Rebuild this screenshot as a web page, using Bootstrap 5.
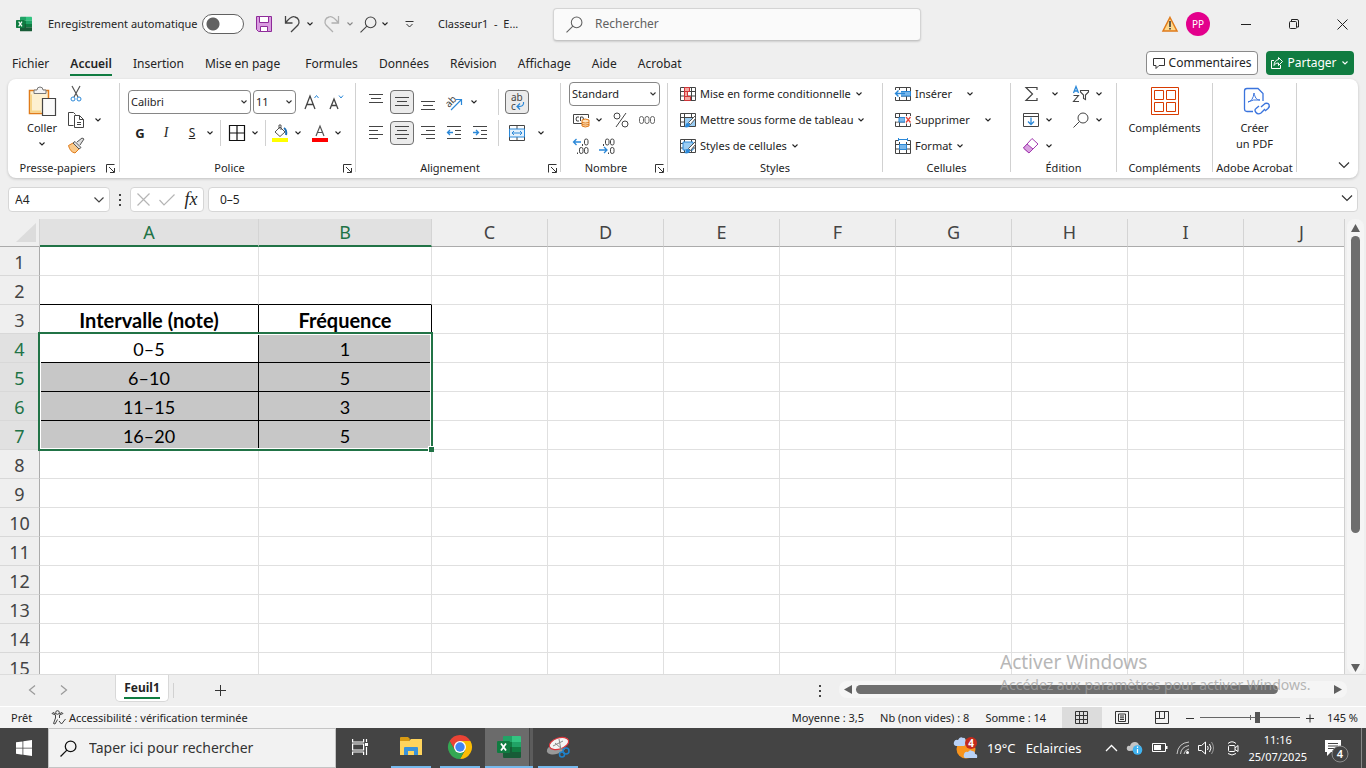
<!DOCTYPE html>
<html lang="fr">
<head>
<meta charset="utf-8">
<meta name="viewport" content="width=device-width, initial-scale=1">
<title>Classeur1 - Excel</title>
<link href="https://cdn.jsdelivr.net/npm/bootstrap@5.3.0/dist/css/bootstrap.min.css" rel="stylesheet">
<style>
body{font-family:"Noto Sans","Open Sans",sans-serif;font-size:11px;line-height:16px;color:#242424;background:#efefef;overflow:hidden}
svg{display:block;flex:none;fill:none;overflow:visible}
button,.form-control,.form-select{font-size:inherit;line-height:inherit}
.plain{border:0;background:none;padding:0;color:inherit;display:flex;align-items:center;justify-content:center;white-space:nowrap;flex:none}
.s12{width:12px}.s16{width:16px}.s24{width:24px;height:24px}
.m12{margin-left:12px}
.ic{stroke:#444;stroke-width:1}
.t12{font-size:12px}.t13{font-size:13px}.t14{font-size:14px}
/* title bar */
.titlebar{height:48px;padding-left:16px}
.quick{width:537px}
.autosave{width:154px}
.form-check-input.toggle{width:42px;height:20px;margin:0 12px 0 0;border:1px solid #616161;background:#fff radial-gradient(circle at 10px 9px,#616161 0 6px,#fff 7px) no-repeat;border-radius:10px;flex:none}
.finder{width:368px;height:33px;background:#fafafa;border:1px solid #d4d4d4;border-bottom-color:#c4c4c4;border-radius:4px;padding:0 12px;box-shadow:0 1px 2px #0002}
.finder input,.cellref input,.formula input{border:0;background:none;padding:0;box-shadow:none;color:inherit}
.finder input::placeholder{color:#616161}
.avatar{width:24px;height:24px;border-radius:50%;background:#e3008c;color:#fff;font-size:10px}
.winbtn{width:48px;height:32px}
/* tabs */
.tabs{height:30px;padding:0 12px}
.tabs .nav{gap:21px}
.tabs .nav-link{padding:2px 0 0;color:#242424;font-size:12px;line-height:21px;border-bottom:2px solid transparent}
.tabs .nav-link.active{font-weight:600;border-color:#107c41}
.cmt{height:24px;width:112px;border:1px solid #8a8a8a;border-radius:4px;background:#fff}
.share{height:24px;width:88px;border-radius:4px;background:#107c41;color:#fff}
/* ribbon */
.ribbon{margin:1px 8px 0;height:99px;background:#fff;border-radius:8px;box-shadow:0 1px 3px #0003}
.group{padding-top:2px;flex:none}
.rows{height:78px}
.rows.two{padding-top:8px;gap:5px}
.line{height:26px;display:flex;align-items:center}
.sep{width:1px;background:#d1d1d1;flex:none}
.gsep{margin:4px 0 6px}
.caption{height:18px;text-align:center;position:relative;padding-top:1px}
.launch{position:absolute;right:3px;top:5px}
.on{background:#ebebeb;border:1px solid #707070;border-radius:4px}
.picker{height:24px;border:1px solid #868686;border-radius:4px;padding:0 14px 0 2px;color:#242424;background:#fff url("data:image/svg+xml,%3Csvg xmlns='http://www.w3.org/2000/svg' viewBox='0 0 8 8'%3E%3Cpath d='M1.500 2.500 4 5l2.500-2.500' fill='none' stroke='%23333' stroke-width='1.100'/%3E%3C/svg%3E") no-repeat right 2px center/8px 8px}
.big{flex-direction:column;justify-content:flex-start;line-height:16px}
/* formula bar */
.fbar{margin:9px 8px 0;height:25px}
.box{border:1px solid #d6d6d6;border-radius:4px;background:#fff;height:25px;display:flex;align-items:center}
.cellref{width:102px;padding:0 5px 0 6px}
.fx{font:italic 18px "Liberation Serif",serif}
/* sheet */
.sheet{margin-top:7px;border-bottom:1px solid #dcdcdc}
.gridwrap{overflow:hidden;border-right:1px solid #d0d0d0;margin-right:2px;min-width:0}
.cells{table-layout:fixed;width:1360px;border-collapse:separate;border-spacing:0;color:#000;text-align:center}
.cells th,.cells td{padding:2px 0 0;font-size:18px;line-height:26px;height:29px;font-weight:400}
.cells thead th{padding:0;height:28px;line-height:27px;color:#444;background:#efefef;border-bottom:1px solid #ababab;border-right:1px solid #d4d4d4}
.cells thead th.sel{background:#e1e1e1;color:#217346;border-bottom:2px solid #217346;line-height:26px}
.cells tbody th{color:#444;background:#efefef;border-right:1px solid #ababab;border-bottom:1px solid #d8d8d8}
.cells tbody th.sel{background:#e1e1e1;color:#217346}
.cells td{background:#fff;border-right:1px solid #e0e0e0;border-bottom:1px solid #e0e0e0;font-family:Lato,sans-serif;position:relative}
.cells td.k{border-color:#000}
.cells td.kb{border-bottom-color:#000}
.cells td.g{background:#c7c7c7}
.cells td.h{font-weight:700;font-size:20px}
.range{position:absolute;left:-2px;top:-2px;width:395px;height:119px;border:2px solid #217346;box-shadow:inset 0 0 0 1px #fff;z-index:2}
.range i{position:absolute;right:-3px;bottom:-3px;width:6px;height:6px;background:#217346;border:1px solid #fff;border-width:1px 0 0 1px}
.vscroll{width:17px;margin-right:2px;background:#f5f5f5;border-radius:8px;padding:5px 0 2px}
.vthumb{width:9px;height:70%;background:#6e6e6e;border-radius:5px}
/* bottom bars */
.sheetbar{height:31px;padding-left:20px}
.sheettab{width:54px;height:27px;background:#fff;border:1px solid #d8d8d8;border-top:0;border-radius:0 0 5px 5px;font-size:12px;font-weight:700;color:#242424;margin-left:39px}
.sheettab span{border-bottom:2px solid #107c41;line-height:19px}
.hscroll{width:508px;height:17px;margin:6px 19px 0 0;background:#f5f5f5;border-radius:8px;padding:0 5px}
.hthumb{width:89%;height:9px;background:#6e6e6e;border-radius:5px}
.status{height:22px;background:#f3f3f3;border-top:1px solid #fff;padding-left:11px}
.view{width:40px;height:21px}
.zoomer{appearance:none;width:100px;height:16px;margin:0 5px;background:linear-gradient(#666,#666) center/100% 1px no-repeat,linear-gradient(#666,#666) center/1px 5px no-repeat}
.zoomer::-webkit-slider-thumb{appearance:none;width:5px;height:11px;background:#555}
.zoomer::-moz-range-thumb{width:5px;height:11px;background:#555;border:0;border-radius:0}
.taskbar{height:40px;background:#444;color:#fff}
.tasksearch{width:288px;background:#f2f2f2;border:1px solid #c4c4c4;padding-left:11px;color:#333}
.tasksearch input{border:0;background:none;padding:0;font-size:14px;color:#333;box-shadow:none}
.tasksearch input::placeholder{color:#333;opacity:1}
.app{width:48px;height:40px;border-bottom:2px solid transparent;margin-right:1px}
.app.run{background:linear-gradient(#76b9ed,#76b9ed) bottom/40px 2px no-repeat border-box}
.app.act{background:linear-gradient(#76b9ed,#76b9ed) bottom/48px 2px no-repeat border-box,linear-gradient(90deg,#6b6b6b 44px,#444 44px 45px,#5c5c5c 45px) border-box}
.activate{position:absolute;right:53px;bottom:73px;color:#a0a0a0;opacity:.75;pointer-events:none;width:313px;white-space:nowrap;font-size:14px;line-height:20px}
.activate b{font-weight:400;font-size:19px;line-height:26px;display:block}
</style>
</head>
<body class="vh-100 d-flex flex-column">
<svg width="0" height="0" class="position-absolute" aria-hidden="true">
<symbol id="cv" viewBox="0 0 8 8"><path d="M1.500 2.500 4 5l2.500-2.500" fill="none" stroke="currentColor" stroke-width="1.100"/></symbol>
<symbol id="ln" viewBox="0 0 9 9"><path d="M.5 8.500V.500h8M3 3l5 5M8.500 4v4.500H4" fill="none" stroke="#333" stroke-width="1"/></symbol>
<symbol id="xl" viewBox="0 0 24 22"><path fill="#21a366" d="M6 1q0-1 1-1h8v6H6z"/><path fill="#33c481" d="M15 0h8q1 0 1 1v5h-9z"/><path fill="#107c41" d="M6 6h9v5H6zM15 11h9v5h-9z"/><path fill="#21a366" d="M15 6h9v5h-9z"/><path fill="#185c37" d="M6 11h9v5h9v5q0 1-1 1H7q-1 0-1-1z"/><path fill="#107c41" d="M1 5h11q1 0 1 1v10q0 1-1 1H1q-1 0-1-1V6q0-1 1-1z"/><path d="m4 7.500 5 7M9 7.500l-5 7" stroke="#fff" stroke-width="1.800"/></symbol>
<symbol id="mg" viewBox="0 0 16 16"><circle cx="10" cy="6" r="5" fill="none"/><path d="M6.500 9.500.500 15.500" fill="none"/></symbol>
<symbol id="tb" viewBox="0 0 16 14"><path d="M.5.500h15v13H.500zM.500 4.500h15M.500 9h15M4.500.500v13M11.500.500v13" fill="none" stroke="#444"/></symbol>
<symbol id="br" viewBox="0 0 12 12"><path d="m11.500 0-7 7 2 2 5-6z" fill="#fff" stroke="#555" stroke-width="1"/><path d="M0 11.500c2 0 1-3 3-4q3 0 3 2c-1 3-4 2.500-6 2z" fill="#2b88d8"/></symbol>
</svg>

<header class="titlebar d-flex align-items-center flex-shrink-0">
 <div class="quick d-flex align-items-center flex-shrink-0">
  <svg class="s16" height="16"><use href="#xl"/></svg>
  <label for="auto" class="autosave ms-3 text-nowrap">Enregistrement automatique</label>
  <input id="auto" class="form-check-input toggle" type="checkbox" role="switch">
  <button class="plain" aria-label="Enregistrer"><svg width="16" height="16"><path fill="#d99be0" stroke="#8e2b99" d="M.500.500h15v15h-13l-2-2z"/><path fill="#fff" stroke="#8e2b99" d="M3.500.500h9v6h-9zM4.500 10.500h7v5h-7z"/></svg></button>
  <button class="plain ms-2" aria-label="Annuler"><svg width="24" height="18" class="ic"><path stroke-width="1.300" d="M5.500 1v7h7M5.500 8C10 2 13 1 15 2c4 1 5 5 3 8l-7 7"/></svg></button>
  <button class="plain s12" aria-label="Options d’annulation"><svg width="8" height="8"><use href="#cv"/></svg></button>
  <button class="plain ms-1" aria-label="Rétablir" disabled><svg width="24" height="18" stroke="#b0b0b0"><path stroke-width="1.300" d="M18.500 1v7h-7M18.500 8C14 2 11 1 9 2c-4 1-5 5-3 8l7 7"/></svg></button>
  <button class="plain s12 opacity-50" aria-label="Options de rétablissement" disabled><svg width="8" height="8"><use href="#cv"/></svg></button>
  <button class="plain ms-1" aria-label="Aperçu"><svg width="17" height="17" class="ic" stroke-width="1.300"><use href="#mg"/></svg></button>
  <button class="plain s16" aria-label="Options"><svg width="8" height="8"><use href="#cv"/></svg></button>
  <button class="plain m12 me-4" aria-label="Personnaliser"><svg width="9" height="9"><path d="M.500 1.500h8M1.500 4l3 3 3-3" stroke="#333"/></svg></button>
  <span class="text-nowrap">Classeur1&nbsp; -&nbsp; E...</span>
 </div>
 <div class="finder d-flex align-items-center t12">
  <svg width="17" height="17" stroke="#616161"><use href="#mg"/></svg>
  <input class="form-control ms-2 ps-1" type="search" placeholder="Rechercher" aria-label="Rechercher">
 </div>
 <div class="ms-auto d-flex align-items-center">
  <svg width="16" height="16" class="me-1"><path d="M8 1.500 15 15H1z" fill="#ffd98c" stroke="#e07b1a" stroke-width="1.500"/><path d="M8 5v6M8 12v1.500" stroke="#333" stroke-width="1.500"/></svg>
  <span class="avatar d-flex align-items-center justify-content-center ms-1 me-2">PP</span>
  <button class="plain winbtn ms-1" aria-label="Réduire"><svg width="10" height="10"><path d="M0 5.500h10" stroke="#222"/></svg></button>
  <button class="plain winbtn" aria-label="Restaurer"><svg width="10" height="10" stroke="#222"><path d="M2.500 2V.500h5.500q1.500 0 1.500 1.500v6H8"/><rect x=".5" y="2.500" width="7" height="7" rx="1"/></svg></button>
  <button class="plain winbtn" aria-label="Fermer"><svg width="11" height="11"><path d="m.5.500 10 10M10.500.500l-10 10" stroke="#222"/></svg></button>
 </div>
</header>

<nav class="tabs d-flex align-items-center flex-shrink-0">
 <ul class="nav flex-nowrap">
  <li class="nav-item"><a class="nav-link" href="#">Fichier</a></li>
  <li class="nav-item"><a class="nav-link active" href="#">Accueil</a></li>
  <li class="nav-item"><a class="nav-link" href="#">Insertion</a></li>
  <li class="nav-item me-1"><a class="nav-link" href="#">Mise en page</a></li>
  <li class="nav-item"><a class="nav-link" href="#">Formules</a></li>
  <li class="nav-item"><a class="nav-link" href="#">Données</a></li>
  <li class="nav-item"><a class="nav-link" href="#">Révision</a></li>
  <li class="nav-item"><a class="nav-link" href="#">Affichage</a></li>
  <li class="nav-item"><a class="nav-link" href="#">Aide</a></li>
  <li class="nav-item"><a class="nav-link" href="#">Acrobat</a></li>
 </ul>
 <button class="plain cmt ms-auto me-2 t12"><svg width="12" height="12" class="me-1"><path d="M.500 1.500h11v7H6l-3 3v-3H.500z" stroke="#333"/></svg>Commentaires</button>
 <button class="plain share t12"><svg width="12" height="12" class="me-1" stroke="#fff"><path d="M3 3.500H.500v8h9V8M7.500.500l4 4-4 4V6C5 6 4 7 3 8.500 3 5 5 3 7.500 2.500z"/></svg>Partager<svg width="8" height="8" class="ms-1"><use href="#cv"/></svg></button>
</nav>

<main class="ribbon d-flex flex-shrink-0">
 <section class="group" style="width:111px">
  <div class="rows d-flex">
   <button class="plain big pt-1 ps-2" style="width:60px"><svg width="28" height="35"><path d="M3.500 5.500h19v23h-19z" transform="translate(-2)" fill="#fdf0d0" stroke="#e07b1a" stroke-width="1.500"/><path d="M3 9.500v17h10" stroke="#f7d488" stroke-width="2"/><path d="M6 8.500V5h3q0-3 3-3t3 3h3v3.500z" fill="#f3f3f3" stroke="#777"/><path d="M14.500 13.500h13v17h-13z" fill="#fafafa" stroke="#444" stroke-width="1.200"/></svg><span>Coller</span><svg width="8" height="8" class="mt-1"><use href="#cv"/></svg></button>
   <div style="width:20px"><div class="line"><button class="plain" aria-label="Couper"><svg width="16" height="16"><path d="m4 0 6 11M12 0 6 11" stroke="#555" stroke-width="1.200"/><circle cx="5" cy="13" r="2" stroke="#2b88d8"/><circle cx="11" cy="13" r="2" stroke="#2b88d8"/></svg></button></div>
   <div class="line"><button class="plain" aria-label="Copier"><svg width="17" height="16" class="ic"><path d="M5.500 13.500h-5V.500h5l2 2M6.500 3.500h5l4 4v8h-9zM11.500 3.500v4h4M9 10.500h4M9 12.500h4"/></svg></button></div>
   <div class="line"><button class="plain" aria-label="Reproduire la mise en forme"><svg width="17" height="16"><path d="M.500 7.500 5 5l6 6-4 4Q2 14 .500 7.500z" fill="#f9c98a" stroke="#e07b1a"/><path d="m5 5 2-1.500 6 6L11 11zM9 4l5-4 2 1-4 6" fill="#ddd" stroke="#555"/></svg></button></div></div>
   <div class="ms-1"><div class="line"></div><div class="line"><button class="plain s12" aria-label="Options de copie"><svg width="8" height="8"><use href="#cv"/></svg></button></div></div>
  </div>
  <div class="caption pe-2 me-1">Presse-papiers</div><div class="position-relative"><svg width="9" height="9" class="position-absolute end-0 bottom-0 mb-1 me-1"><use href="#ln"/></svg></div>
 </section><div class="sep gsep"></div>

 <section class="group" style="width:235px">
  <div class="rows two d-flex flex-column ps-2">
   <div class="line"><select class="picker form-select" style="width:123px" aria-label="Police"><option>Calibri</option></select><select class="picker form-select" style="width:43px;margin-left:2px" aria-label="Taille"><option>11</option></select>
    <button class="plain s24 ms-1" aria-label="Agrandir la police"><svg width="16" height="16" class="ic"><path stroke-width="1.300" d="m1 15 5-13 5 13M3 10.500h6"/><path d="m10.500 4 2-2.500 2 2.500" stroke="#2b88d8"/></svg></button>
    <button class="plain s24" aria-label="Réduire la police"><svg width="16" height="16" class="ic"><path stroke-width="1.300" d="m2 15 4-10 4 10M3.500 11.500h5"/><path d="m11 1.500 2 2.500 2-2.500" stroke="#2b88d8"/></svg></button></div>
   <div class="line"><button class="plain s24 t13 fw-bold">G</button><button class="plain s24 t14" style="margin-left:2px;font-family:'Liberation Serif',serif"><i>I</i></button><button class="plain s24 t12 text-decoration-underline" style="margin-left:2px">S</button><button class="plain s12" aria-label="Soulignement"><svg width="8" height="8"><use href="#cv"/></svg></button>
    <div class="sep h-100 mx-1"></div>
    <button class="plain s24" aria-label="Bordures"><svg width="16" height="16"><path d="M.500.500h15v15H.500zM8 0v16M0 8h16" stroke="#111" stroke-width="1.200"/></svg></button><button class="plain s12" aria-label="Choix des bordures"><svg width="8" height="8"><use href="#cv"/></svg></button>
    <div class="sep h-100" style="margin:0 2px 0 4px"></div>
    <button class="plain s24" aria-label="Remplissage"><svg width="16" height="17"><path d="M0 13h16v4H0z" fill="#ff0"/><path d="m3 7 5-5 5 5-5 4.500zM7 4V0h2v5" fill="#fff" stroke="#555"/><path d="M12 3q3 2 2 7" stroke="#1f6fb5" stroke-width="2"/></svg></button><button class="plain s12" aria-label="Couleurs de remplissage"><svg width="8" height="8"><use href="#cv"/></svg></button>
    <button class="plain s24 ms-1" aria-label="Couleur de police"><svg width="16" height="17"><path d="M0 13h16v4H0z" fill="red"/><path d="m4 11 4-10 4 10M5.500 7.500h5" stroke="#555" stroke-width="1.200"/></svg></button><button class="plain s12" aria-label="Couleurs de police"><svg width="8" height="8"><use href="#cv"/></svg></button></div>
  </div>
  <div class="caption pe-3">Police<svg width="9" height="9" class="launch"><use href="#ln"/></svg></div>
 </section><div class="sep gsep"></div>

 <section class="group" style="width:204px">
  <div class="rows two d-flex flex-column ps-2">
   <div class="line" style="gap:2px"><button class="plain s24" aria-label="Aligner en haut"><svg width="14" height="16" class="ic"><path d="M0 .500h14M2 4.500h10M0 8.500h14"/></svg></button><button class="plain s24 on" aria-label="Aligner au centre"><svg width="14" height="16" class="ic"><path d="M0 3.500h14M2 7.500h10M0 11.500h14"/></svg></button><button class="plain s24" aria-label="Aligner en bas"><svg width="14" height="16" class="ic"><path d="M0 7.500h14M2 11.500h10M0 15.500h14"/></svg></button><button class="plain s24" aria-label="Orientation"><svg width="17" height="17"><path d="M5 16 15 6M10 5.500h5.500V11" stroke="#2b88d8" stroke-width="1.200"/><text x="0" y="11" transform="rotate(-45 5 9)" font-size="10" fill="#444">ab</text></svg></button><button class="plain s12" aria-label="Options d’orientation"><svg width="8" height="8"><use href="#cv"/></svg></button>
    <div class="sep h-100 ms-3 me-1"></div><button class="plain s24 on" aria-label="Renvoyer à la ligne"><svg width="16" height="18"><text x="2" y="8" font-size="10" fill="#444">ab</text><text x="2" y="17" font-size="10" fill="#444">c</text><path d="M14.500 9q1 5-6 4.500M11 10.500l-3 3 3 3" stroke="#2b88d8" stroke-width="1.200"/></svg></button></div>
   <div class="line" style="gap:2px"><button class="plain s24" aria-label="Aligner à gauche"><svg width="14" height="14" class="ic"><path d="M0 .500h14M0 4.500h9M0 8.500h14M0 12.500h9"/></svg></button><button class="plain s24 on" aria-label="Centrer"><svg width="14" height="14" class="ic"><path d="M0 .500h14M2 4.500h10M0 8.500h14M2 12.500h10"/></svg></button><button class="plain s24" aria-label="Aligner à droite"><svg width="14" height="14" class="ic"><path d="M0 .500h14M5 4.500h9M0 8.500h14M5 12.500h9"/></svg></button><button class="plain s24" aria-label="Diminuer le retrait"><svg width="14" height="14" class="ic"><path d="M0 .500h14M8 4.500h6M8 8.500h6M0 12.500h14"/><path d="M6 6.500H.500m2.500-2.500-2.500 2.500L3 9" stroke="#2b88d8" stroke-width="1.300"/></svg></button><button class="plain s24" aria-label="Augmenter le retrait"><svg width="14" height="14" class="ic"><path d="M0 .500h14M8 4.500h6M8 8.500h6M0 12.500h14"/><path d="M0 6.500h5.500m-2.500-2.500 2.500 2.500L3 9" stroke="#2b88d8" stroke-width="1.300"/></svg></button>
    <div class="sep h-100 ms-1 me-1"></div><button class="plain s24" aria-label="Fusionner et centrer"><svg width="16" height="16"><path d="M.500.500h15v15H.500zM8 0v4M8 12v4" stroke="#444"/><path d="M.500 4h15v8H.500z" fill="#e5f1fb" stroke="#2b88d8"/><path d="M3 8h10M5 6 3 8l2 2M11 6l2 2-2 2" stroke="#2b88d8"/></svg></button><button class="plain s12 ms-1" aria-label="Options de fusion"><svg width="8" height="8"><use href="#cv"/></svg></button></div>
  </div>
  <div class="caption pe-3">Alignement<svg width="9" height="9" class="launch"><use href="#ln"/></svg></div>
 </section><div class="sep gsep"></div>

 <section class="group" style="width:106px">
  <div class="rows ps-2">
   <div class="line"><select class="picker form-select" style="width:91px" aria-label="Format de nombre"><option>Standard</option></select></div>
   <div class="line"><button class="plain s24" aria-label="Format comptable"><svg width="17" height="15"><path d="M9 10.500H.500v-9h15V5M6 4q-3-1-3 2t3 2M7.500 8V4q3-1 3 2" stroke="#444"/><path d="M9 7q3-2 7 0v6q-4 2-7 0zM9 9.500q3 1 7 0M9 11.500q3 1 7 0" fill="#fde3c0" stroke="#e07b1a"/></svg></button><button class="plain s12" aria-label="Devises"><svg width="8" height="8"><use href="#cv"/></svg></button><button class="plain s24 ms-1" aria-label="Pourcentage"><svg width="16" height="16" class="ic"><circle cx="4" cy="4" r="3"/><circle cx="12" cy="12" r="3"/><path d="M13 1 3 15"/></svg></button><button class="plain s24" style="margin-left:2px" aria-label="Milliers"><svg width="16" height="9" stroke="#666"><rect x=".5" y=".5" width="4" height="7" rx="2"/><rect x="6" y=".5" width="4" height="7" rx="2"/><rect x="11.500" y=".5" width="4" height="7" rx="2"/></svg></button></div>
   <div class="line"><button class="plain s24" aria-label="Ajouter une décimale"><svg width="16" height="16"><path d="M8 4H.500M3.500 1l-3 3 3 3" stroke="#2b88d8" stroke-width="1.300"/><g class="ic"><rect x="11.500" y="1" width="3.500" height="6" rx="1.700"/><rect x="6.500" y="9.500" width="3.500" height="6" rx="1.700"/><rect x="11.500" y="9.500" width="3.500" height="6" rx="1.700"/><path d="M9.500 6v2M4.500 14.500v1.500"/></g></svg></button><button class="plain s24" style="margin-left:2px" aria-label="Réduire les décimales"><svg width="16" height="16"><path d="M0 12h8M5 9l3 3-3 3" stroke="#2b88d8" stroke-width="1.300"/><g class="ic"><rect x="6.500" y="1" width="3.500" height="6" rx="1.700"/><rect x="11.500" y="1" width="3.500" height="6" rx="1.700"/><rect x="11.500" y="9.500" width="3.500" height="6" rx="1.700"/><path d="M4.500 6v2M9.500 14.500v1.500"/></g></svg></button></div>
  </div>
  <div class="caption pe-3">Nombre<svg width="9" height="9" class="launch"><use href="#ln"/></svg></div>
 </section><div class="sep gsep"></div>

 <section class="group" style="width:214px">
  <div class="rows ps-2 ms-1">
   <div class="line"><button class="plain"><svg width="16" height="14" class="me-1"><use href="#tb"/><path d="M4.500.500h5v4h-5zM4.500 4.500h3v5h-3zM4.500 9.500h6v4h-6z" fill="#f4a6a0" stroke="#d13438"/></svg>Mise en forme conditionnelle<svg width="8" height="8" class="ms-1"><use href="#cv"/></svg></button></div>
   <div class="line"><button class="plain"><svg width="16" height="15" class="me-1"><use href="#tb" height="14"/><path d="M5 5h10v8H5z" fill="#9bcdf3"/><use href="#br" x="4" y="2" width="12" height="13"/></svg>Mettre sous forme de tableau<svg width="8" height="8" class="ms-1"><use href="#cv"/></svg></button></div>
   <div class="line"><button class="plain"><svg width="16" height="15" class="me-1"><use href="#tb" height="14"/><path d="M3 3h10v8H3z" fill="#9bcdf3" stroke="#2b88d8"/><use href="#br" x="4" y="2" width="12" height="13"/></svg>Styles de cellules<svg width="8" height="8" class="ms-1"><use href="#cv"/></svg></button></div>
  </div>
  <div class="caption">Styles</div>
 </section><div class="sep gsep"></div>

 <section class="group" style="width:127px">
  <div class="rows ps-2 ms-1">
   <div class="line"><button class="plain"><svg width="16" height="14" class="me-1"><use href="#tb"/><path d="M5 4.500h10.500V9H5z" fill="#7ab8ea" stroke="#2b88d8"/><path d="M0 3h6v7H0z" fill="#fff"/><path d="M10 6.500H.500m3-3-3 3 3 3" stroke="#2b88d8" stroke-width="1.400"/></svg>Insérer</button><button class="plain s12 m12" aria-label="Options d’insertion"><svg width="8" height="8"><use href="#cv"/></svg></button></div>
   <div class="line"><button class="plain"><svg width="16" height="14" class="me-1"><use href="#tb"/><path d="M4 4.500h6V9H4z" fill="#7ab8ea" stroke="#2b88d8"/><path d="M10 3h6v7.500h-6zM0 5h3v3.500H0z" fill="#fff"/><path d="m11 4 4.500 5.500M15.500 4 11 9.500" stroke="#e8443a" stroke-width="1.300"/></svg>Supprimer</button><button class="plain s12 m12" aria-label="Options de suppression"><svg width="8" height="8"><use href="#cv"/></svg></button></div>
   <div class="line"><button class="plain"><svg width="16" height="16" class="me-1"><use href="#tb" y="2" height="14"/><path d="M3 0h10v4H3z" fill="#fff"/><path d="M3.500 0v3M12.500 0v3M3.500 1.500h9" stroke="#2b88d8"/><path d="M4.500 6.500h7v5h-7z" fill="#7ab8ea" stroke="#2b88d8"/></svg>Format<svg width="8" height="8" class="ms-1"><use href="#cv"/></svg></button></div>
  </div>
  <div class="caption">Cellules</div>
 </section><div class="sep gsep"></div>

 <section class="group" style="width:105px">
  <div class="rows d-flex ps-2">
   <div style="width:50px">
    <div class="line"><button class="plain s24" aria-label="Somme"><svg width="13" height="14" class="ic"><path stroke-width="1.200" d="M12 3V.500H1L7.500 7 1 13.500h11V11"/></svg></button><button class="plain s12 ms-1 ps-1" aria-label="Fonctions"><svg width="8" height="8"><use href="#cv"/></svg></button></div>
    <div class="line"><button class="plain s24" aria-label="Remplir"><svg width="16" height="14"><path d="M.500.500h15v13H.500zM.500 3.500h15" stroke="#444"/><path d="M8 4.500V11M5 8.500 8 11.500l3-3" stroke="#2b88d8" stroke-width="1.300"/></svg></button><button class="plain s12" aria-label="Options de remplissage"><svg width="8" height="8"><use href="#cv"/></svg></button></div>
    <div class="line"><button class="plain s24" aria-label="Effacer"><svg width="16" height="16"><path d="M.500 10 9 .500 15 6l-9 9z" fill="#fff" stroke="#a33cb0"/><path d="m.5 10 3.500-4 6 5-4 4z" fill="#d9a0e0" stroke="#a33cb0"/></svg></button><button class="plain s12" aria-label="Options d’effacement"><svg width="8" height="8"><use href="#cv"/></svg></button></div>
   </div>
   <div>
    <div class="line"><button class="plain s24" aria-label="Trier et filtrer"><svg width="16" height="16"><path d="m.5 7 2.500-6.500L5.500 7M1.500 5h3" stroke="#2b88d8" stroke-width="1.300"/><path d="M.500 9.500h5L.500 15.500h5.500M7.500 4.500h8v1.500L12.500 9v4.500l-2-1V9l-3-3z" stroke="#444" stroke-width="1.100"/></svg></button><button class="plain s12" aria-label="Options de tri"><svg width="8" height="8"><use href="#cv"/></svg></button></div>
    <div class="line"><button class="plain s24" aria-label="Rechercher et sélectionner"><svg width="16" height="16" class="ic"><use href="#mg"/></svg></button><button class="plain s12" aria-label="Options de recherche"><svg width="8" height="8"><use href="#cv"/></svg></button></div>
   </div>
  </div>
  <div class="caption">Édition</div>
 </section><div class="sep gsep"></div>

 <section class="group" style="width:95px">
  <div class="rows pt-1"><button class="plain big w-100"><svg width="28" height="35" stroke="#d83b01"><path d="M.500 2.500h27v27H.500zM3.500 5.500h9v9h-9zM15.500 5.500h9v9h-9zM3.500 17.500h9v9h-9zM15.500 17.500h9v9h-9z"/></svg>Compléments</button></div>
  <div class="caption">Compléments</div>
 </section><div class="sep gsep"></div>

 <section class="group" style="width:83px">
  <div class="rows pt-1"><button class="plain big w-100"><svg width="28" height="35" stroke="#3b74dd" class="ms-1"><path stroke-width="1.300" d="M10 26.500H4q-2.500 0-2.500-2.500V6q0-2.500 2.500-2.500h11l5 5V16"/><path d="M5 17q5-1 6-9c1 4 2 7 6 7q-7-1-12 2z"/><path stroke-width="1.400" d="m18 22 4-3.500q3-1 4 1t-1 4L22 26M22 24l-4 4q-3 2-5-.500t0-4L16 21"/></svg><span>Créer</span><span>un PDF</span></button></div>
  <div class="caption text-nowrap">Adobe Acrobat</div>
 </section><div class="sep gsep"></div>
 <div class="flex-grow-1 d-flex justify-content-end align-items-end pe-2 pb-1"><button class="plain mb-1" aria-label="Réduire le ruban"><svg width="12" height="10"><path d="m1 2.500 5 5 5-5" stroke="#333" stroke-width="1.200"/></svg></button></div>
</main>

<div class="fbar d-flex flex-shrink-0 t12">
 <div class="box cellref"><input class="form-control" value="A4" aria-label="Zone Nom"><svg width="10" height="8"><path d="m.5 1.500 4.500 4.500 4.500-4.500" stroke="#444" stroke-width="1.200"/></svg></div>
 <svg width="20" height="25"><path d="M9 7h2v2H9zM9 12h2v2H9zM9 17h2v2H9z" fill="#444"/></svg>
 <div class="box justify-content-around" style="width:74px"><button class="plain s24" aria-label="Annuler la saisie"><svg width="13" height="13"><path d="m.5.500 12 12M12.500.500l-12 12" stroke="#b5b5b5" stroke-width="1.200"/></svg></button><button class="plain s24" aria-label="Valider"><svg width="16" height="12"><path d="m.5 6 4.500 5L15.500.500" stroke="#b5b5b5" stroke-width="1.200"/></svg></button><button class="plain s24 fx">fx</button></div>
 <div class="box formula flex-grow-1 ms-1 pe-1" style="padding-left:11px"><input class="form-control" value="0–5" aria-label="Barre de formule"><svg width="12" height="10" class="mb-1"><path d="m1 2.500 5 5 5-5" stroke="#333" stroke-width="1.200"/></svg></div>
</div>

<div class="sheet d-flex flex-grow-1" style="min-height:0">
 <div class="gridwrap flex-grow-1">
  <table class="cells">
   <colgroup><col style="width:40px"><col style="width:219px"><col style="width:173px"><col span="8"></colgroup>
   <thead><tr><th><svg width="40" height="27"><path d="M36 4v19H16z" fill="#dcdcdc"/></svg></th><th class="sel">A</th><th class="sel">B</th><th>C</th><th>D</th><th>E</th><th>F</th><th>G</th><th>H</th><th>I</th><th>J</th></tr></thead>
   <tbody>
   <tr><th>1</th><td></td><td></td><td></td><td></td><td></td><td></td><td></td><td></td><td></td><td></td></tr>
   <tr><th>2</th><td class="kb"></td><td class="kb"></td><td></td><td></td><td></td><td></td><td></td><td></td><td></td><td></td></tr>
   <tr><th>3</th><td class="k h">Intervalle (note)</td><td class="k h">Fréquence</td><td></td><td></td><td></td><td></td><td></td><td></td><td></td><td></td></tr>
   <tr><th class="sel">4</th><td class="k">0–5<div class="range"><i></i></div></td><td class="k g">1</td><td></td><td></td><td></td><td></td><td></td><td></td><td></td><td></td></tr>
   <tr><th class="sel">5</th><td class="k g">6–10</td><td class="k g">5</td><td></td><td></td><td></td><td></td><td></td><td></td><td></td><td></td></tr>
   <tr><th class="sel">6</th><td class="k g">11–15</td><td class="k g">3</td><td></td><td></td><td></td><td></td><td></td><td></td><td></td><td></td></tr>
   <tr><th class="sel">7</th><td class="k g">16–20</td><td class="k g">5</td><td></td><td></td><td></td><td></td><td></td><td></td><td></td><td></td></tr>
   <tr><th>8</th><td></td><td></td><td></td><td></td><td></td><td></td><td></td><td></td><td></td><td></td></tr>
   <tr><th>9</th><td></td><td></td><td></td><td></td><td></td><td></td><td></td><td></td><td></td><td></td></tr>
   <tr><th>10</th><td></td><td></td><td></td><td></td><td></td><td></td><td></td><td></td><td></td><td></td></tr>
   <tr><th>11</th><td></td><td></td><td></td><td></td><td></td><td></td><td></td><td></td><td></td><td></td></tr>
   <tr><th>12</th><td></td><td></td><td></td><td></td><td></td><td></td><td></td><td></td><td></td><td></td></tr>
   <tr><th>13</th><td></td><td></td><td></td><td></td><td></td><td></td><td></td><td></td><td></td><td></td></tr>
   <tr><th>14</th><td></td><td></td><td></td><td></td><td></td><td></td><td></td><td></td><td></td><td></td></tr>
   <tr><th>15</th><td></td><td></td><td></td><td></td><td></td><td></td><td></td><td></td><td></td><td></td></tr>
   </tbody>
  </table>
 </div>
 <div class="vscroll d-flex flex-column align-items-center flex-shrink-0">
  <svg width="9" height="8"><path d="M4.500 0 9 8H0z" fill="#606060"/></svg>
  <div class="flex-grow-1 py-1 d-flex"><div class="vthumb"></div></div>
  <svg width="9" height="8"><path d="M4.500 8 9 0H0z" fill="#606060"/></svg>
 </div>
</div>

<div class="sheetbar d-flex flex-shrink-0">
 <button class="plain s24" aria-label="Feuille précédente" style="margin-top:3px"><svg width="8" height="12"><path d="M7 1.500 1.500 6 7 10.500" stroke="#999" stroke-width="1.200"/></svg></button>
 <button class="plain s24 ms-2" aria-label="Feuille suivante" style="margin-top:3px"><svg width="8" height="12"><path d="M1 1.500 6.500 6 1 10.500" stroke="#999" stroke-width="1.200"/></svg></button>
 <button class="plain sheettab me-1"><span>Feuil1</span></button>
 <div class="sep my-2"></div>
 <button class="plain s24" style="margin:3px 0 0 34px" aria-label="Nouvelle feuille"><svg width="11" height="11"><path d="M5.500 0v11M0 5.500h11" stroke="#333"/></svg></button>
 <svg width="8" height="25" class="ms-auto me-3" style="margin-top:3px"><path d="M4 7h2v2H4zM4 12h2v2H4zM4 17h2v2H4z" fill="#444"/></svg>
 <div class="hscroll d-flex align-items-center flex-shrink-0"><svg width="8" height="9"><path d="M0 4.500 8 0v9z" fill="#606060"/></svg><div class="flex-grow-1 px-1"><div class="hthumb"></div></div><svg width="8" height="9"><path d="M8 4.500 0 0v9z" fill="#606060"/></svg></div>
</div>

<div class="status d-flex align-items-center flex-shrink-0">
 <span style="width:40px">Prêt</span>
 <svg width="14" height="15" class="ic me-1"><circle cx="6.500" cy="2.500" r="1.800"/><path d="M1 3.500 4.500 5v3L2.500 13.500l1.500.5L6.500 9.500M12 3.500 8.500 5v3M1 3.500l1-1 3 1.500M12 3.500l-1-1-3 1.500M8 11l2.500 3 4-5"/></svg><span>Accessibilité : vérification terminée</span>
 <span class="ms-auto">Moyenne : 3,5</span><span class="ms-3">Nb (non vides) : 8</span><span class="ms-3 me-3">Somme : 14</span>
 <button class="plain view" style="background:#dcdcdc" aria-label="Normal"><svg width="14" height="14"><path d="M.500.500h12v12H.500zM4.500.500v12M8.500.500v12M.500 4.500h12M.500 8.500h12" stroke="#333"/></svg></button>
 <button class="plain view" aria-label="Mise en page"><svg width="14" height="14"><path d="M.500.500h13v12H.500zM3.500 3h7v7.500h-7zM5 5h4M5 6.800h4M5 8.500h4" stroke="#333"/></svg></button>
 <button class="plain view" aria-label="Sauts de page"><svg width="14" height="14"><path d="M.500.500h13v12H.500zM4.500.500v7M9.500.500v7h-9" stroke="#333"/></svg></button>
 <button class="plain" style="margin-left:3px" aria-label="Zoom arrière"><svg width="10" height="10"><path d="M1 5.500h8" stroke="#333"/></svg></button>
 <input class="zoomer" type="range" min="0" max="100" value="58" aria-label="Zoom">
 <button class="plain" aria-label="Zoom avant"><svg width="10" height="10"><path d="M1 5.500h8M5 1.500v8" stroke="#333"/></svg></button>
 <span class="m12 me-2 text-nowrap">145 %</span>
</div>

<footer class="taskbar d-flex flex-shrink-0 align-items-center">
 <button class="plain" style="width:48px" aria-label="Démarrer"><svg width="16" height="16" fill="#fff"><path fill="#fff" d="M0 2.300 6.500 1.400v6.300H0zM7.300 1.300 16 0v7.700H7.300zM0 8.400h6.500v6.300L0 13.800zM7.300 8.400H16V16l-8.700-1.200z"/></svg></button>
 <div class="tasksearch align-self-stretch d-flex align-items-center"><svg width="17" height="17" stroke="#111" stroke-width="1.200"><use href="#mg"/></svg><input class="form-control ms-2 ps-1" placeholder="Taper ici pour rechercher" aria-label="Recherche Windows"></div>
 <button class="plain app" aria-label="Affichage des tâches" style="margin-right:3px"><svg width="17" height="16" stroke="#fff" stroke-width="1.200"><path d="M.600 0v3h11V0M.600 16v-3h11v3M.600 5h11v6H.600zM14.500 0v3M14.500 8v8"/><path d="M13 4h3v3h-3z" fill="#fff" stroke="none"/></svg></button>
 <button class="plain app run" aria-label="Explorateur"><svg width="22" height="20"><path d="M0 1q0-1 1-1h7l2 2-1 2H0z" fill="#d99b13"/><path d="M0 4h9l2-2h11v16H0z" fill="#ffd45c"/><path d="M4 11q0-1 1-1h12q1 0 1 1v7h-4v-4H8v4H4z" fill="#3a92d9"/></svg></button>
 <button class="plain app run" aria-label="Chrome"><svg width="24" height="24" viewBox="0 0 24 24"><path d="M12 6h10.400A12 12 0 0 0 1.600 6l5.200 9z" fill="#ea4335"/><path d="M12 6h10.400A12 12 0 0 1 12 24l5.200-9z" fill="#fbbc04"/><path d="M12 24A12 12 0 0 1 1.600 6l5.200 9H17z" fill="#34a853"/><circle cx="12" cy="12" r="6" fill="#fff"/><circle cx="12" cy="12" r="4.700" fill="#4285f4"/></svg></button>
 <button class="plain app act" aria-label="Excel"><svg width="24" height="22"><use href="#xl"/></svg></button>
 <button class="plain app run" aria-label="Outil Capture"><svg width="24" height="22"><ellipse cx="10" cy="13" rx="9.500" ry="5" fill="#999" transform="rotate(-15 10 13)"/><ellipse cx="13" cy="7.500" rx="10" ry="5.500" fill="#f4f4f4" stroke="#d9353c" stroke-width="1.200" transform="rotate(-18 13 7.500)"/><path d="m13 3 2 11M7 10l10-5M9 7l8 7" stroke="#888"/><circle cx="20" cy="15" r="3" stroke="#1d82cc" stroke-width="1.500"/><circle cx="16" cy="18.500" r="2.500" stroke="#1d82cc" stroke-width="1.500"/></svg></button>
 <div class="ms-auto d-flex align-items-center">
  <svg width="26" height="24"><circle cx="13" cy="13" r="9.500" fill="#f7941e"/><path d="M3 10q-3-1-2-4t4-2q2-4 5-2 2-1 2.500 2 2 4-1.500 6z" fill="#b9d2f7"/><path d="M12 22q-2-1-1-4t4-2q2-3 4-1 3 0 3 3 3 0 2 4z" fill="#b9d2f7"/><circle cx="18" cy="7" r="6" fill="#c42b1c"/><text x="18" y="11" font-size="10" font-weight="700" text-anchor="middle" fill="#fff">4</text></svg>
  <span class="t13 ms-2 text-nowrap">19°C&nbsp;&nbsp; Eclaircies</span>
  <svg width="13" height="8" class="ms-4"><path d="m1 7 5.500-5.500L12 7" stroke="#fff" stroke-width="1.300"/></svg>
  <svg width="18" height="14" class="ms-2"><path d="M3 10q-3-1-2-4 1-2 3-1 1-4 5-4 3 0 4 3 3 1 2 5z" fill="#c4c4c4"/><circle cx="11.500" cy="9" r="4.800" fill="#40b3f0"/><path d="M11.500 8v4M11.500 5.500V7" stroke="#fff" stroke-width="1.200"/></svg>
  <svg width="16" height="10" class="ms-2"><path d="M.500.500h13v8H.500z" stroke="#fff"/><path d="M2 2h7v5H2zM14 3h1.500v3H14z" fill="#fff"/></svg>
  <svg width="14" height="14" class="ms-2" stroke="#ccc"><path d="M1 13Q2 2 13 1M4.500 13q.5-7 8.500-8.500M8 13q.5-4 5-5" /><circle cx="11.500" cy="11.500" r="1.500" fill="#fff" stroke="none"/></svg>
  <svg width="17" height="14" class="ms-2" stroke="#fff"><path d="M.500 4.500h3L7.500 1v12l-4-3.500h-3zM9.500 5q1.500 2 0 4M11.500 3q3 4 0 8"/><path d="M13.500 1q4 6 0 12" stroke="#999"/></svg>
  <svg width="13" height="17" class="m12" stroke="#fff"><path d="M1 3.500Q5 0 9 3.500M1 13.500q4 3 8 0"/><rect x="1.500" y="5.500" width="6.500" height="6" rx="1"/><path d="M8 8l3-2.500v6L8 9.500"/></svg>
  <div class="text-center ms-2" style="line-height:17px">11:16<br>25/07/2025</div>
  <svg width="28" height="28" class="ms-3 mt-1"><path d="M2 4h16v12H8l-4 4v-4H2z" fill="#fff"/><path d="M5 7.500h10M5 10h10M5 12.500h7" stroke="#444"/><circle cx="17" cy="18" r="8" fill="#444" stroke="#8d8d8d"/><text x="17" y="22" font-size="11" font-weight="600" text-anchor="middle" fill="#fff">4</text></svg>
  <div class="sep align-self-stretch" style="height:40px;margin:0 4px 0 10px;background:#888"></div>
 </div>
</footer>

<div class="activate"><b>Activer Windows</b>Accédez aux paramètres pour activer Windows.</div>
<script src="https://cdn.jsdelivr.net/npm/bootstrap@5.3.0/dist/js/bootstrap.bundle.min.js"></script>
</body>
</html>
